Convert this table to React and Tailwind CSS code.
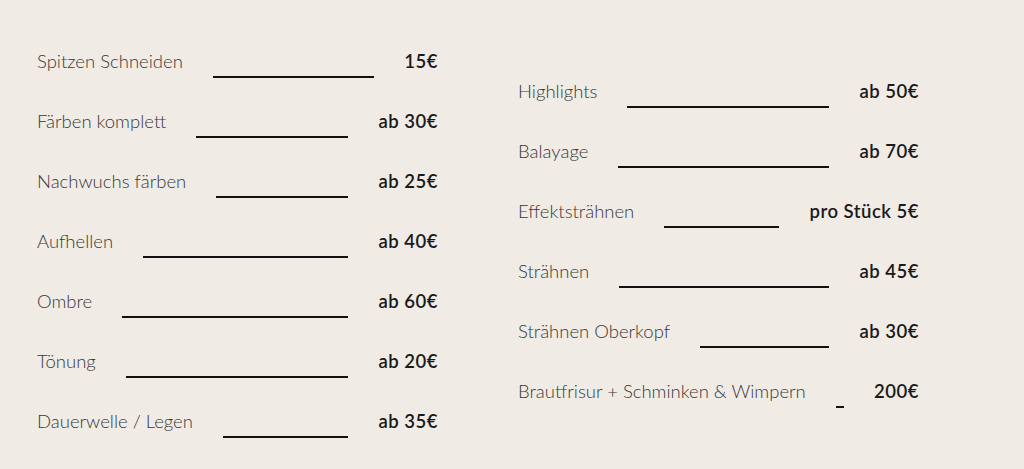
const left = [
  ["Spitzen Schneiden", "15€"],
  ["Färben komplett", "ab 30€"],
  ["Nachwuchs färben", "ab 25€"],
  ["Aufhellen", "ab 40€"],
  ["Ombre", "ab 60€"],
  ["Tönung", "ab 20€"],
  ["Dauerwelle / Legen", "ab 35€"],
];
const right = [
  ["Highlights", "ab 50€"],
  ["Balayage", "ab 70€"],
  ["Effektsträhnen", "pro Stück 5€"],
  ["Strähnen", "ab 45€"],
  ["Strähnen Oberkopf", "ab 30€"],
  ["Brautfrisur + Schminken & Wimpern", "200€"],
];

function Row({ label, price }) {
  return (
    <div className="flex h-[60px] items-center gap-[30px]">
      <span className="whitespace-nowrap text-[18.5px] font-light text-[#383838]">{label}</span>
      <div className="mb-[14px] h-[2px] min-w-[6px] flex-1 self-end bg-[#111]" />
      <span className="whitespace-nowrap text-[18.5px] font-semibold tracking-[0.5px] text-[#1a1a1a]">{price}</span>
    </div>
  );
}

export default function App() {
  return (
    <div
      className="h-[469px] w-[1024px] bg-[#f0ebe5] pl-[37px]"
      style={{ fontFamily: "Lato, 'Open Sans', sans-serif" }}
    >
      <div className="grid grid-cols-[401px_401px] items-center gap-x-[80px] pt-[32px]">
        <div className="flex flex-col">
          {left.map(([l, p]) => (
            <Row key={l} label={l} price={p} />
          ))}
        </div>
        <div className="flex flex-col">
          {right.map(([l, p]) => (
            <Row key={l} label={l} price={p} />
          ))}
        </div>
      </div>
    </div>
  );
}
